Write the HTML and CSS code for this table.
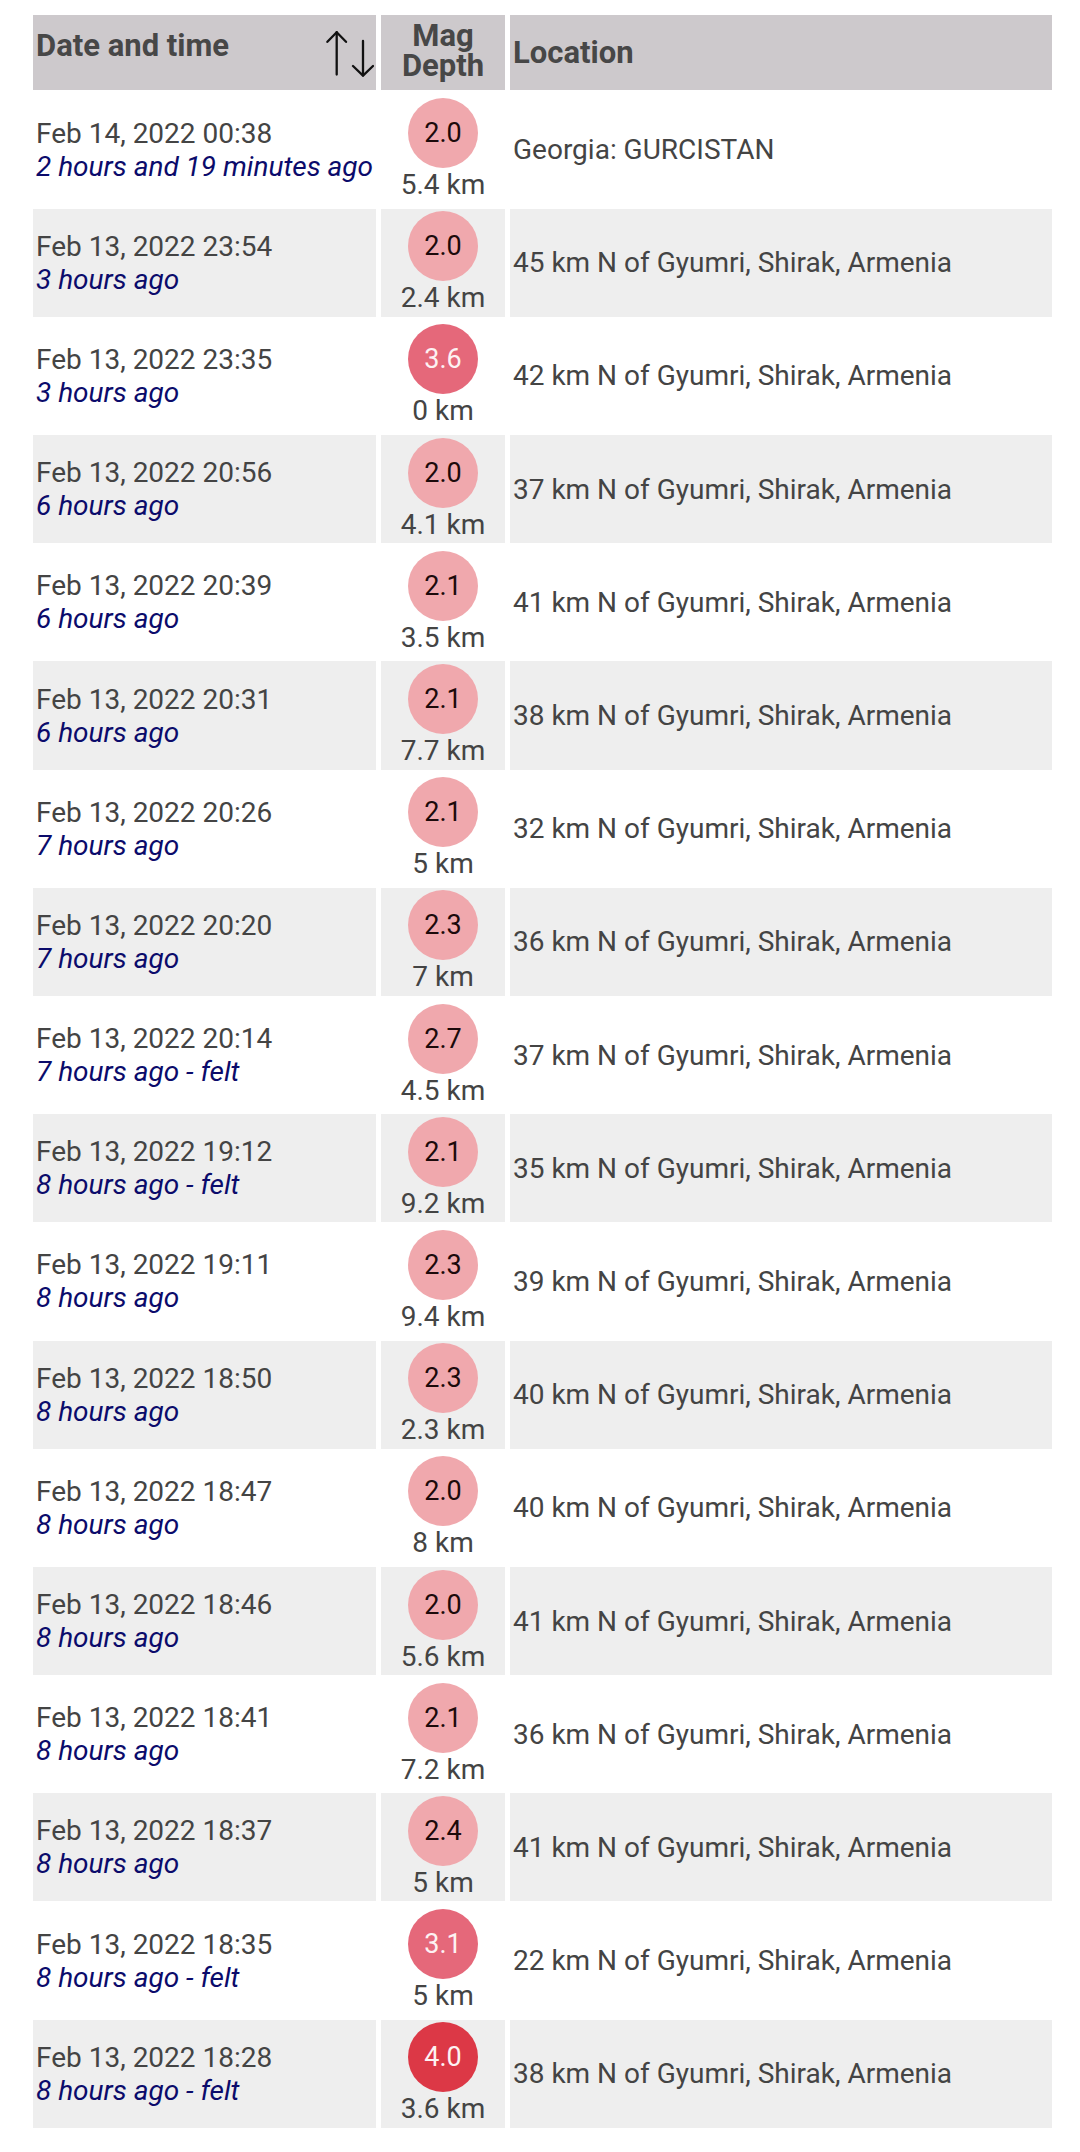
FILE: index.html
```html
<!DOCTYPE html>
<html lang="en">
<head>
<meta charset="utf-8">
<title>Earthquakes</title>
<link rel="stylesheet" href="styles.css">
</head>
<body>
<table class="quakes">
  <colgroup>
    <col class="c-date">
    <col class="c-mag">
    <col class="c-loc">
  </colgroup>
  <thead>
    <tr>
      <th class="h-date">
        <div class="h-date-inner">
          <span>Date and time</span>
          <svg class="sort" width="48" height="46" viewBox="0 0 48 46" aria-hidden="true">
            <g fill="none" stroke="#111" stroke-width="2.3" stroke-linecap="round" stroke-linejoin="round">
              <path d="M10.7 1.2 V43.5"/>
              <path d="M1.4 10.8 L10.7 1.2 L20 10.8"/>
              <path d="M37 10 V44.6"/>
              <path d="M27 35 L37 44.6 L47 35"/>
            </g>
          </svg>
        </div>
      </th>
      <th class="h-mag"><div class="hl">Mag</div><div class="hl">Depth</div></th>
      <th class="h-loc">Location</th>
    </tr>
  </thead>
  <tbody>
    <tr><td class="date"><div class="dt">Feb 14, 2022 00:38</div><div class="ago">2 hours and 19 minutes ago</div></td><td class="mag"><span class="ball low">2.0</span><div class="depth">5.4 km</div></td><td class="loc">Georgia: GURCISTAN</td></tr>
    <tr><td class="date"><div class="dt">Feb 13, 2022 23:54</div><div class="ago">3 hours ago</div></td><td class="mag"><span class="ball low">2.0</span><div class="depth">2.4 km</div></td><td class="loc">45 km N of Gyumri, Shirak, Armenia</td></tr>
    <tr><td class="date"><div class="dt">Feb 13, 2022 23:35</div><div class="ago">3 hours ago</div></td><td class="mag"><span class="ball mid">3.6</span><div class="depth">0 km</div></td><td class="loc">42 km N of Gyumri, Shirak, Armenia</td></tr>
    <tr><td class="date"><div class="dt">Feb 13, 2022 20:56</div><div class="ago">6 hours ago</div></td><td class="mag"><span class="ball low">2.0</span><div class="depth">4.1 km</div></td><td class="loc">37 km N of Gyumri, Shirak, Armenia</td></tr>
    <tr><td class="date"><div class="dt">Feb 13, 2022 20:39</div><div class="ago">6 hours ago</div></td><td class="mag"><span class="ball low">2.1</span><div class="depth">3.5 km</div></td><td class="loc">41 km N of Gyumri, Shirak, Armenia</td></tr>
    <tr><td class="date"><div class="dt">Feb 13, 2022 20:31</div><div class="ago">6 hours ago</div></td><td class="mag"><span class="ball low">2.1</span><div class="depth">7.7 km</div></td><td class="loc">38 km N of Gyumri, Shirak, Armenia</td></tr>
    <tr><td class="date"><div class="dt">Feb 13, 2022 20:26</div><div class="ago">7 hours ago</div></td><td class="mag"><span class="ball low">2.1</span><div class="depth">5 km</div></td><td class="loc">32 km N of Gyumri, Shirak, Armenia</td></tr>
    <tr><td class="date"><div class="dt">Feb 13, 2022 20:20</div><div class="ago">7 hours ago</div></td><td class="mag"><span class="ball low">2.3</span><div class="depth">7 km</div></td><td class="loc">36 km N of Gyumri, Shirak, Armenia</td></tr>
    <tr><td class="date"><div class="dt">Feb 13, 2022 20:14</div><div class="ago">7 hours ago - felt</div></td><td class="mag"><span class="ball low">2.7</span><div class="depth">4.5 km</div></td><td class="loc">37 km N of Gyumri, Shirak, Armenia</td></tr>
    <tr><td class="date"><div class="dt">Feb 13, 2022 19:12</div><div class="ago">8 hours ago - felt</div></td><td class="mag"><span class="ball low">2.1</span><div class="depth">9.2 km</div></td><td class="loc">35 km N of Gyumri, Shirak, Armenia</td></tr>
    <tr><td class="date"><div class="dt">Feb 13, 2022 19:11</div><div class="ago">8 hours ago</div></td><td class="mag"><span class="ball low">2.3</span><div class="depth">9.4 km</div></td><td class="loc">39 km N of Gyumri, Shirak, Armenia</td></tr>
    <tr><td class="date"><div class="dt">Feb 13, 2022 18:50</div><div class="ago">8 hours ago</div></td><td class="mag"><span class="ball low">2.3</span><div class="depth">2.3 km</div></td><td class="loc">40 km N of Gyumri, Shirak, Armenia</td></tr>
    <tr><td class="date"><div class="dt">Feb 13, 2022 18:47</div><div class="ago">8 hours ago</div></td><td class="mag"><span class="ball low">2.0</span><div class="depth">8 km</div></td><td class="loc">40 km N of Gyumri, Shirak, Armenia</td></tr>
    <tr><td class="date"><div class="dt">Feb 13, 2022 18:46</div><div class="ago">8 hours ago</div></td><td class="mag"><span class="ball low">2.0</span><div class="depth">5.6 km</div></td><td class="loc">41 km N of Gyumri, Shirak, Armenia</td></tr>
    <tr><td class="date"><div class="dt">Feb 13, 2022 18:41</div><div class="ago">8 hours ago</div></td><td class="mag"><span class="ball low">2.1</span><div class="depth">7.2 km</div></td><td class="loc">36 km N of Gyumri, Shirak, Armenia</td></tr>
    <tr><td class="date"><div class="dt">Feb 13, 2022 18:37</div><div class="ago">8 hours ago</div></td><td class="mag"><span class="ball low">2.4</span><div class="depth">5 km</div></td><td class="loc">41 km N of Gyumri, Shirak, Armenia</td></tr>
    <tr><td class="date"><div class="dt">Feb 13, 2022 18:35</div><div class="ago">8 hours ago - felt</div></td><td class="mag"><span class="ball mid">3.1</span><div class="depth">5 km</div></td><td class="loc">22 km N of Gyumri, Shirak, Armenia</td></tr>
    <tr><td class="date"><div class="dt">Feb 13, 2022 18:28</div><div class="ago">8 hours ago - felt</div></td><td class="mag"><span class="ball high">4.0</span><div class="depth">3.6 km</div></td><td class="loc">38 km N of Gyumri, Shirak, Armenia</td></tr>
  </tbody>
</table>
</body>
</html>
```

FILE: styles.css
```css
html, body {
  margin: 0;
  padding: 0;
  background: #ffffff;
}

body {
  font-family: Roboto, "Liberation Sans", Arial, sans-serif;
  color: #444444;
  font-size: 28px;
}

.quakes {
  margin: 9.8px 0 0 28px;
  width: 1029px;
  table-layout: fixed;
  border-collapse: separate;
  border-spacing: 5px 5.2px;
}

.c-date { width: 343px; }
.c-mag { width: 124px; }
.c-loc { width: 542px; }

.quakes th {
  background: #cdc9cc;
  color: #474747;
  font-weight: 700;
  font-size: 31px;
  line-height: 30px;
  height: 75.7px;
  padding: 0 3px;
  box-sizing: border-box;
  vertical-align: middle;
}

.h-date {
  text-align: left;
  vertical-align: top !important;
  padding: 16.6px 2px 0 3px !important;
}

.h-date-inner {
  display: flex;
  justify-content: space-between;
  align-items: flex-start;
}

.sort {
  display: block;
  margin-top: 0.1px;
}

.h-mag {
  text-align: center;
  vertical-align: top !important;
  padding: 6px 2px 0 2px !important;
}

.hl {
  height: 30px;
  white-space: nowrap;
}

.h-loc {
  text-align: left;
}

.quakes td {
  padding: 2.6px 3px;
  height: 108px;
  box-sizing: border-box;
  vertical-align: middle;
  line-height: normal;
}

.quakes tbody tr:nth-child(even) td {
  background: #eeeeee;
}

.dt {
  color: #444444;
  white-space: nowrap;
}

.ago {
  color: #0b0b6b;
  font-style: italic;
  white-space: nowrap;
}

.mag {
  text-align: center;
}

.ball {
  display: flex;
  align-items: center;
  justify-content: center;
  width: 70px;
  height: 70px;
  margin: 0 auto;
  border-radius: 50%;
  font-size: 27px;
}

.ball.low {
  background: #f0a8ad;
  color: #1c0a0b;
}

.ball.mid {
  background: #e5687a;
  color: #fdf2f3;
}

.ball.high {
  background: #dc3846;
  color: #fdf2f3;
}

.depth {
  color: #444444;
  white-space: nowrap;
}

.loc {
  color: #444444;
}
```
